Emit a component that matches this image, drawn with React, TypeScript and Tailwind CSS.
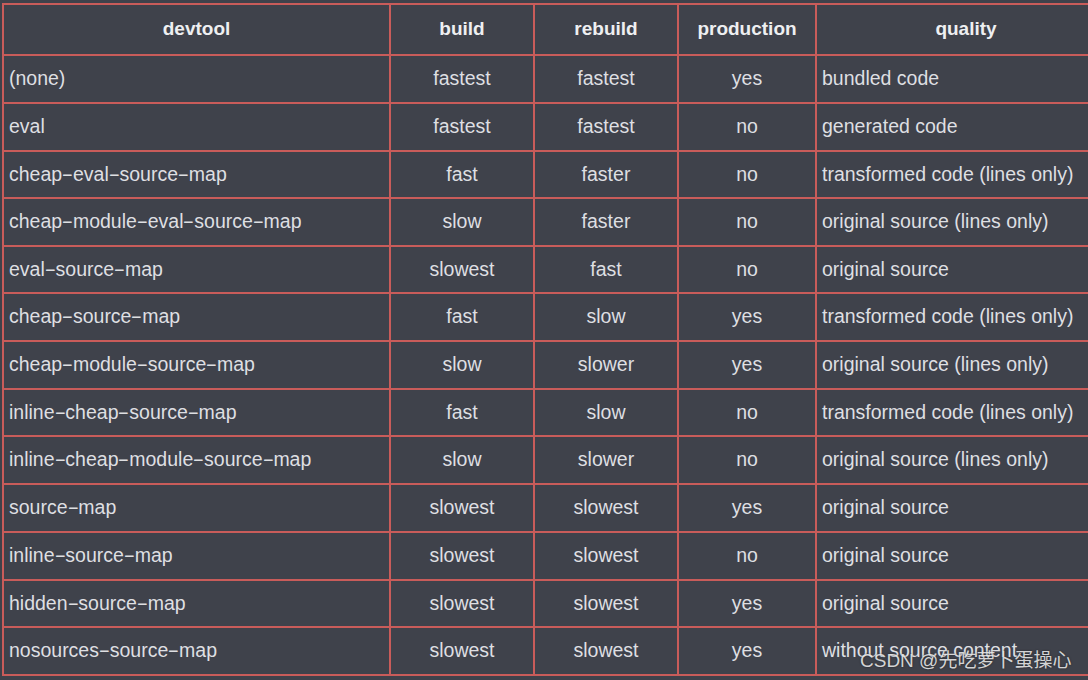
import React from 'react';

type Row = [string, string, string, string, string];

const rows: Row[] = [
  ['(none)', 'fastest', 'fastest', 'yes', 'bundled code'],
  ['eval', 'fastest', 'fastest', 'no', 'generated code'],
  ['cheap-eval-source-map', 'fast', 'faster', 'no', 'transformed code (lines only)'],
  ['cheap-module-eval-source-map', 'slow', 'faster', 'no', 'original source (lines only)'],
  ['eval-source-map', 'slowest', 'fast', 'no', 'original source'],
  ['cheap-source-map', 'fast', 'slow', 'yes', 'transformed code (lines only)'],
  ['cheap-module-source-map', 'slow', 'slower', 'yes', 'original source (lines only)'],
  ['inline-cheap-source-map', 'fast', 'slow', 'no', 'transformed code (lines only)'],
  ['inline-cheap-module-source-map', 'slow', 'slower', 'no', 'original source (lines only)'],
  ['source-map', 'slowest', 'slowest', 'yes', 'original source'],
  ['inline-source-map', 'slowest', 'slowest', 'no', 'original source'],
  ['hidden-source-map', 'slowest', 'slowest', 'yes', 'original source'],
  ['nosources-source-map', 'slowest', 'slowest', 'yes', 'without source content'],
];

// row box heights (content + bottom border), taken from the line spacing
const rowHeights = [
  'h-[48px]', 'h-[48px]', 'h-[47px]', 'h-[48px]', 'h-[47px]', 'h-[48px]', 'h-[48px]',
  'h-[47px]', 'h-[48px]', 'h-[48px]', 'h-[48px]', 'h-[47px]', 'h-[48px]',
];

const cols = ['w-[387px]', 'w-[144px]', 'w-[144px]', 'w-[138px]', 'w-[300px]'];

// the source renders hyphens wide, close to an en dash
function Dashed({ text }: { text: string }) {
  const parts = text.split('-');
  return (
    <>
      {parts.map((p, i) => (
        <React.Fragment key={i}>
          {i > 0 && <span className="inline-block w-[10.8px] scale-x-[1.8] text-center">-</span>}
          {p}
        </React.Fragment>
      ))}
    </>
  );
}

function Cell({ col, children, left }: { col: number; children: React.ReactNode; left?: boolean }) {
  return (
    <div
      className={`${cols[col]} flex h-full shrink-0 items-center border-r-2 border-[#c95c5a] ${
        left ? 'justify-start pl-[5px]' : 'justify-center'
      }`}
    >
      <span className="whitespace-nowrap">{children}</span>
    </div>
  );
}

export default function App() {
  return (
    <div className="relative h-[680px] w-[1088px] overflow-hidden bg-[#3f424b] pl-[2px] pt-[3px] font-['Liberation_Sans',Arial,sans-serif] text-[19.5px] text-[#dedfe2]">
      <div className="w-max border-l-2 border-t-2 border-[#c95c5a]">
        <div className="flex h-[51px] border-b-2 border-[#c95c5a] text-[19px] font-bold text-[#eeeff1]">
          <Cell col={0}>devtool</Cell>
          <Cell col={1}>build</Cell>
          <Cell col={2}>rebuild</Cell>
          <Cell col={3}>production</Cell>
          <Cell col={4}>quality</Cell>
        </div>
        {rows.map((r, i) => (
          <div key={r[0]} className={`flex ${rowHeights[i]} border-b-2 border-[#c95c5a]`}>
            <Cell col={0} left>
              <Dashed text={r[0]} />
            </Cell>
            <Cell col={1}>{r[1]}</Cell>
            <Cell col={2}>{r[2]}</Cell>
            <Cell col={3}>{r[3]}</Cell>
            <Cell col={4} left>
              {r[4]}
            </Cell>
          </div>
        ))}
      </div>
      <div className="absolute left-[860px] top-[647px] whitespace-nowrap font-['Liberation_Sans','Noto_Sans_CJK_SC',sans-serif] text-[19px] text-[#e4e4e4] opacity-90 [text-shadow:0_0_2px_rgba(0,0,0,0.6)]">
        CSDN @先吃萝卜蛋操心
      </div>
    </div>
  );
}
